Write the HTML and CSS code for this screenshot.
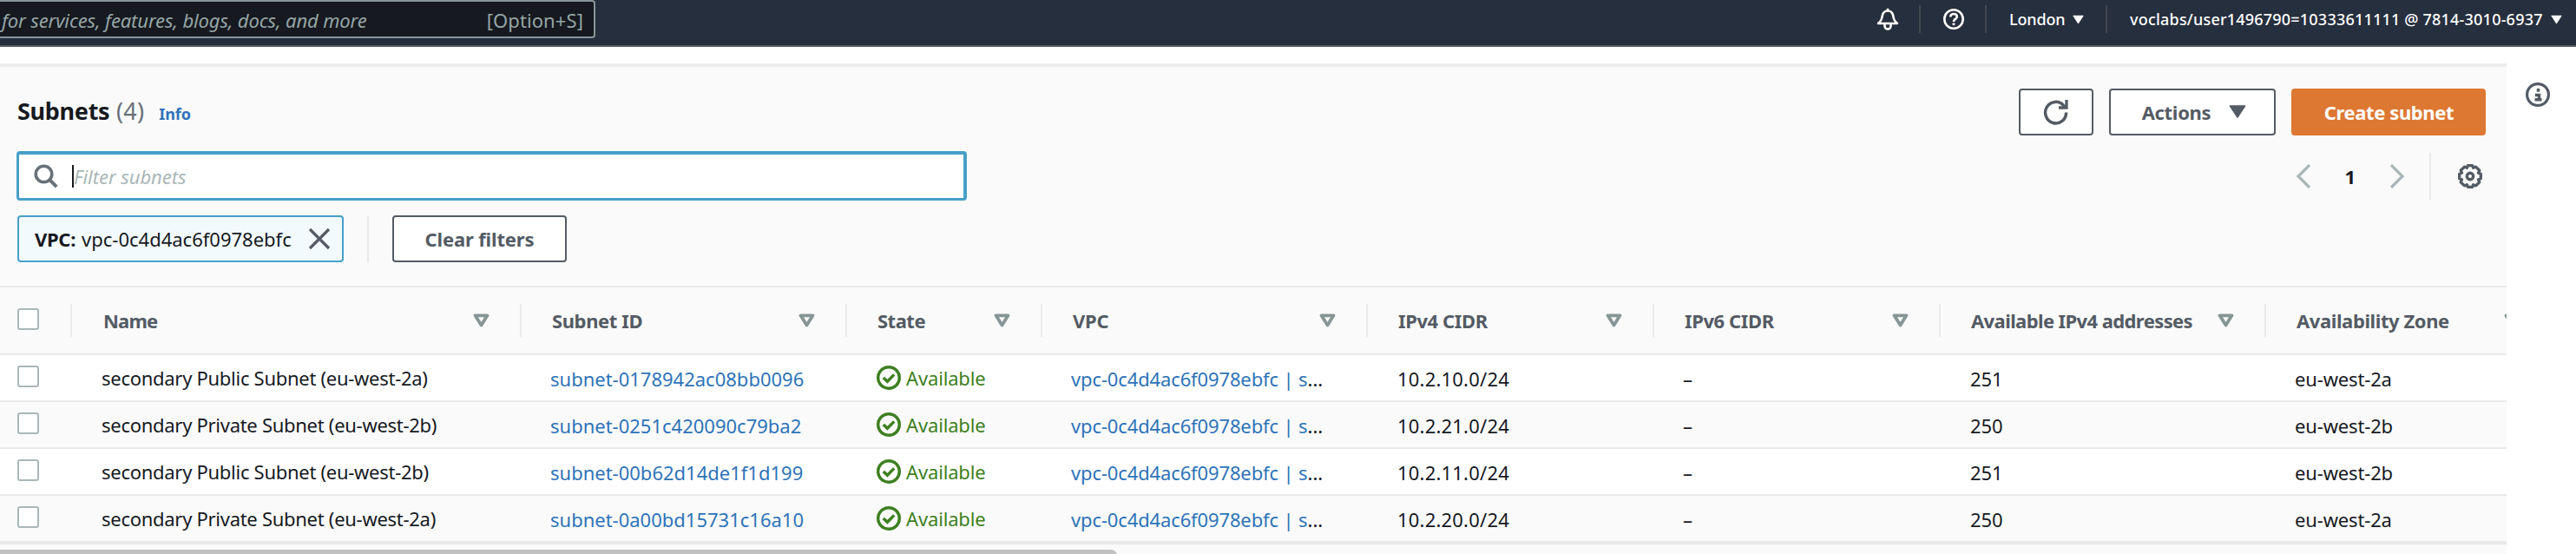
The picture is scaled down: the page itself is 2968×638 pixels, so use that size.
FILE: index.html
```html
<!DOCTYPE html>
<html lang="en">
<head>
<meta charset="utf-8">
<title>Subnets</title>
<link rel="stylesheet" href="styles.css">
</head>
<body>
<svg class="defs" aria-hidden="true">
  <symbol id="sort" viewBox="0 0 18 16"><path d="M2 2.3h14L9 13.5z" fill="none" stroke="#879596" stroke-width="3.8" stroke-linejoin="round"/></symbol>
  <symbol id="ok" viewBox="0 0 28 28"><circle cx="14" cy="14" r="12.300" fill="none" stroke="#3d8020" stroke-width="3.4"/><path d="M7.800 13.900l4.600 4.400 7.800-7.900" fill="none" stroke="#3d8020" stroke-width="3.4"/></symbol>
  <symbol id="caret" viewBox="0 0 20 16"><path d="M1.500 1.500h17L10 14.500z" fill="currentColor" stroke="currentColor" stroke-width="1.600" stroke-linejoin="round"/></symbol>
</svg>

<header class="top">
  <div class="search"><em>for services, features, blogs, docs, and more</em><span class="key">[Option+S]</span></div>
  <nav class="top-nav">
    <div class="nav-item bell">
      <svg width="26" height="26" viewBox="0 0 26 26" fill="none" stroke="#fff" stroke-width="2.600" stroke-linejoin="round"><path d="M2 18C6 14.500 6 13 6.800 9 7.500 5.500 9.500 3.500 13 3.500s5.500 2 6.200 5.500c.8 4 .8 5.500 4.800 9z"/><path d="M13 .8v2.700M9.500 19v2a3.500 3.500 0 0 0 7 0v-2"/></svg>
    </div>
    <div class="nav-item help">
      <svg width="24" height="24" viewBox="0 0 24 24" fill="none" stroke="#fff"><circle cx="12" cy="12" r="10.700" stroke-width="2.600"/><path d="M8.300 9.500C8.300 7 10 6 12 6s3.800 1.100 3.800 3.200c0 2.600-3.800 2.800-3.800 5.800" stroke-width="2.600"/><path d="M12 16.500v2.600" stroke-width="2.800"/></svg>
    </div>
    <div class="nav-item region"><span>London</span><svg class="caret-sm"><use href="#caret"/></svg></div>
    <div class="nav-item account"><span>voclabs/user1496790=10333611111 @ 7814-3010-6937</span><svg class="caret-sm"><use href="#caret"/></svg></div>
  </nav>
</header>

<div class="page">
  <main class="panel">
    <div class="title-row">
      <h1>Subnets <span class="count">(4)</span></h1>
      <a class="info">Info</a>
      <div class="actions">
        <button class="btn refresh"><svg width="30" height="30" viewBox="0 0 30 30" fill="none" stroke="#545b64" stroke-width="3.500"><path d="M26.600 15.500A12 12.300 0 1 1 23.500 7.400L26 10"/><path d="M18 10h9V1" stroke-width="3.300"/></svg></button>
        <button class="btn menu">Actions<svg class="caret-lg"><use href="#caret"/></svg></button>
        <button class="btn primary">Create subnet</button>
      </div>
    </div>
    <div class="filter-row">
      <div class="filter">
        <svg width="28" height="28" viewBox="0 0 28 28" fill="none" stroke="#687078" stroke-width="3.500"><circle cx="11.500" cy="11.500" r="9.300"/><path d="M18.200 18.200l8 8" stroke-width="4"/></svg>
        <i class="cursor"></i><em>Filter subnets</em>
      </div>
      <div class="pager">
        <svg width="18" height="28" viewBox="0 0 18 28" fill="none" stroke="#aab7b8" stroke-width="3.200"><path d="M16 1L3 14l13 13"/></svg>
        <b>1</b>
        <svg width="18" height="28" viewBox="0 0 18 28" fill="none" stroke="#aab7b8" stroke-width="3.200"><path d="M2 1l13 13L2 27"/></svg>
        <i class="rule"></i>
        <svg class="gear" width="28" height="28" viewBox="0 0 28 28" fill="none" stroke="#545b64"><path d="M11.400 1.700h5.200l1 2.600 2.900-1.200 4.300 4.200-1.300 2.900 2.800 1.100v5.400l-2.800 1.100 1.300 2.900-4.300 4.200-2.900-1.200-1 2.600h-5.200l-1-2.600-2.900 1.200-4.300-4.200 1.300-2.900-2.800-1.100v-5.400l2.800-1.100-1.300-2.900 4.300-4.200 2.900 1.200z" stroke-width="3.300" stroke-linejoin="round"/><circle cx="14" cy="14" r="3.700" stroke-width="3.400"/></svg>
      </div>
    </div>
    <div class="token-row">
      <div class="token"><b>VPC:</b><span>vpc-0c4d4ac6f0978ebfc</span><svg width="26" height="26" viewBox="0 0 26 26" fill="none" stroke="#545b64" stroke-width="3.200"><path d="M2 2l22 22M24 2L2 24"/></svg></div>
      <i class="rule"></i>
      <button class="btn clear">Clear filters</button>
    </div>

    <div class="table">
      <div class="row head">
        <div class="pick"><i class="box"></i></div>
        <div class="s8">Name<svg><use href="#sort"/></svg></div>
        <div class="s4">Subnet ID<svg><use href="#sort"/></svg></div>
        <div class="s5">State<svg><use href="#sort"/></svg></div>
        <div>VPC<svg><use href="#sort"/></svg></div>
        <div class="s4">IPv4 CIDR<svg><use href="#sort"/></svg></div>
        <div class="s4">IPv6 CIDR<svg><use href="#sort"/></svg></div>
        <div class="s6">Available IPv4 addresses<svg><use href="#sort"/></svg></div>
        <div class="s4">Availability Zone<svg><use href="#sort"/></svg></div>
      </div>
      <div class="row">
        <div class="pick"><i class="box"></i></div><div class="name">secondary Public Subnet (eu-west-2a)</div><div class="link">subnet-0178942ac08bb0096</div><div class="state"><svg><use href="#ok"/></svg>Available</div><div class="vpc"><a>vpc-0c4d4ac6f0978ebfc | s</a>...</div><div class="cidr">10.2.10.0/24</div><div>–</div><div class="num">251</div><div class="zone">eu-west-2a</div>
      </div>
      <div class="row">
        <div class="pick"><i class="box"></i></div><div class="name">secondary Private Subnet (eu-west-2b)</div><div class="link">subnet-0251c420090c79ba2</div><div class="state"><svg><use href="#ok"/></svg>Available</div><div class="vpc"><a>vpc-0c4d4ac6f0978ebfc | s</a>...</div><div class="cidr">10.2.21.0/24</div><div>–</div><div class="num">250</div><div class="zone">eu-west-2b</div>
      </div>
      <div class="row">
        <div class="pick"><i class="box"></i></div><div class="name">secondary Public Subnet (eu-west-2b)</div><div class="link">subnet-00b62d14de1f1d199</div><div class="state"><svg><use href="#ok"/></svg>Available</div><div class="vpc"><a>vpc-0c4d4ac6f0978ebfc | s</a>...</div><div class="cidr">10.2.11.0/24</div><div>–</div><div class="num">251</div><div class="zone">eu-west-2b</div>
      </div>
      <div class="row">
        <div class="pick"><i class="box"></i></div><div class="name">secondary Private Subnet (eu-west-2a)</div><div class="link">subnet-0a00bd15731c16a10</div><div class="state"><svg><use href="#ok"/></svg>Available</div><div class="vpc"><a>vpc-0c4d4ac6f0978ebfc | s</a>...</div><div class="cidr">10.2.20.0/24</div><div>–</div><div class="num">250</div><div class="zone">eu-west-2a</div>
      </div>
    </div>
    <div class="scroll"><div class="thumb"></div></div>
  </main>
  <aside class="help-rail">
    <svg width="28" height="28" viewBox="0 0 28 28" fill="none" stroke="#545b64"><circle cx="14" cy="14" r="12.400" stroke-width="3.200"/><path d="M14.500 7v3.800M10.800 14.500h4.700v6M10.500 19.800h8" stroke-width="3.500"/></svg>
  </aside>
</div>
</body>
</html>
```
FILE: styles.css
```css
* { box-sizing: border-box; }
html, body { margin: 0; height: 638px; overflow: hidden; }
body {
  background: #fff;
  color: #16191f;
  font: 22px/30px "Noto Sans", "Open Sans", sans-serif;
  white-space: nowrap;
}
svg { display: block; flex: none; }
.defs { position: absolute; width: 0; height: 0; }

/* Top navigation */
.top {
  display: flex;
  justify-content: space-between;
  height: 54px;
  background: #262f3e;
  border-bottom: 2px solid #545b64;
}
.search {
  display: flex;
  justify-content: space-between;
  width: 686px;
  height: 44px;
  padding: 6px 12px 0 2px;
  background: #16191f;
  border: solid #879596;
  border-width: 2px 2px 2px 0;
  border-radius: 0 4px 4px 0;
  color: #95a5a6;
}
.search em { letter-spacing: -0.13px; }
.key { letter-spacing: 0.1px; }
.top-nav { display: flex; height: 32px; margin-top: 6px; }
.nav-item {
  display: flex;
  align-items: center;
  color: #fff;
  font-size: 18px;
  font-weight: 500;
  border-right: 2px solid #414750;
}
.bell { width: 51px; }
.help { width: 76px; padding-left: 26px; }
.region { width: 139px; padding-left: 26px; letter-spacing: -0.15px; }
.account { width: 540px; padding-left: 26px; border: 0; letter-spacing: 0.21px; }
.caret-sm { width: 13px; height: 11px; margin-left: 9px; }

/* Content panel */
.page { display: flex; padding-top: 19px; }
.panel {
  width: 2888px;
  height: 565px;
  background: #fafafa;
  border-top: 4px solid #ededed;
  overflow: hidden;
}
.help-rail { padding: 22px 0 0 22px; }
.title-row { display: flex; align-items: center; height: 54px; margin: 25px 24px 0 20px; }
h1 { margin: -3px 0 0; font-size: 27px; line-height: 36px; letter-spacing: -0.3px; }
.count { color: #687078; font-weight: 400; letter-spacing: 0.2px; margin-left: 1px; }
.info { margin: 4px 0 0 17px; color: #2e73b8; font-size: 18px; font-weight: 700; letter-spacing: -0.1px; }
.actions { display: flex; gap: 18px; margin-left: auto; }
.btn {
  display: flex;
  align-items: center;
  justify-content: center;
  height: 54px;
  padding: 0 0 1px;
  background: #fff;
  border: 2px solid #545b64;
  border-radius: 4px;
  color: #545b64;
  font: 700 22px/30px "Noto Sans", "Open Sans", sans-serif;
}
.refresh { width: 86px; }
.menu { width: 192px; padding-left: 4px; letter-spacing: -0.3px; }
.caret-lg { width: 20px; height: 17px; margin-left: 21px; }
.primary { width: 224px; padding-left: 1px; background: #dd7832; border-color: #dd7832; color: #fff; letter-spacing: -0.4px; }

.filter-row { display: flex; justify-content: space-between; margin: 18px 24px 0 19px; }
.filter {
  display: flex;
  align-items: center;
  width: 1095px;
  height: 57px;
  padding-left: 17px;
  background: #fff;
  border: 4px solid #46a0c8;
  border-width: 4px 4px 3px 3px;
  border-radius: 4px;
  color: #aab7b8;
}
.cursor { width: 2px; height: 26px; margin-left: 16px; background: #16191f; }
.filter em { margin: 0; letter-spacing: -0.05px; }
.pager { display: flex; align-items: center; height: 54px; margin-top: 2px; }
.pager b { margin: 0 39px 0 38px; }
.pager .rule { margin-left: 28px; }
.rule { width: 2px; height: 54px; background: #eaeaea; }
.gear { margin: 0 4px 0 31px; }

.token-row { display: flex; margin: 17px 0 0 20px; }
.token {
  display: flex;
  align-items: center;
  width: 376px;
  height: 54px;
  padding: 0 0 1px 18px;
  background: #f2fafe;
  border: 2px solid #46a0c8;
  border-radius: 4px;
}
.token b { letter-spacing: -0.3px; }
.token span { margin-left: 7px; }
.token svg { margin-left: 19px; }
.token-row .rule { margin: 0 27px; }
.clear { width: 201px; letter-spacing: -0.15px; }

/* Table */
.table { margin-top: 27px; border-top: 2px solid #eaeaea; border-bottom: 2px solid #e6e6e6; }
.row {
  display: grid;
  grid-template-columns: 83px 518px 375px 225px 375px 330px 330px 375px 330px;
  height: 54px;
  background: #fff;
  border-bottom: 2px solid #eaeaea;
}
.row:nth-child(odd) { background: #fafafa; }
.row > div { display: flex; align-items: center; padding: 2px 0 0 33px; }
.row > .name { padding: 0 0 0 34px; letter-spacing: -0.28px; }
.row .link, .row a { color: #2e73b8; }
.row > .state { padding: 0 0 0 34px; color: #3d8020; letter-spacing: -0.15px; }
.state svg { width: 28px; height: 28px; margin-right: 6px; }
.vpc a { letter-spacing: -0.13px; }
.row > .cidr { padding-left: 34px; letter-spacing: 0.2px; }
.row > .num { padding-left: 34px; letter-spacing: -0.1px; }
.row > .zone { letter-spacing: -0.15px; }
.row > .pick { padding: 0 0 3px 20px; }
.box { width: 25px; height: 25px; background: #fff; border: 2px solid #aab7b8; border-radius: 3px; }

.head { height: 78px; color: #545b64; font-weight: 700; }
.head > div {
  position: relative;
  justify-content: space-between;
  padding: 0 37px 0 35px;
  letter-spacing: -0.25px;
}
.head > div::after {
  content: "";
  position: absolute;
  right: 0;
  top: 19px;
  width: 2px;
  height: 38px;
  background: #eaeaea;
}
.head svg { width: 19px; height: 16px; }
.head > .s4 { letter-spacing: -0.4px; }
.head > .s5 { letter-spacing: -0.5px; }
.head > .s6 { letter-spacing: -0.6px; }
.head > .s8 { padding-left: 36px; letter-spacing: -0.8px; }

.scroll { padding-top: 6px; }
.thumb { width: 1287px; height: 14px; background: #c1c1c1; border-radius: 0 7px 7px 0; }
```
